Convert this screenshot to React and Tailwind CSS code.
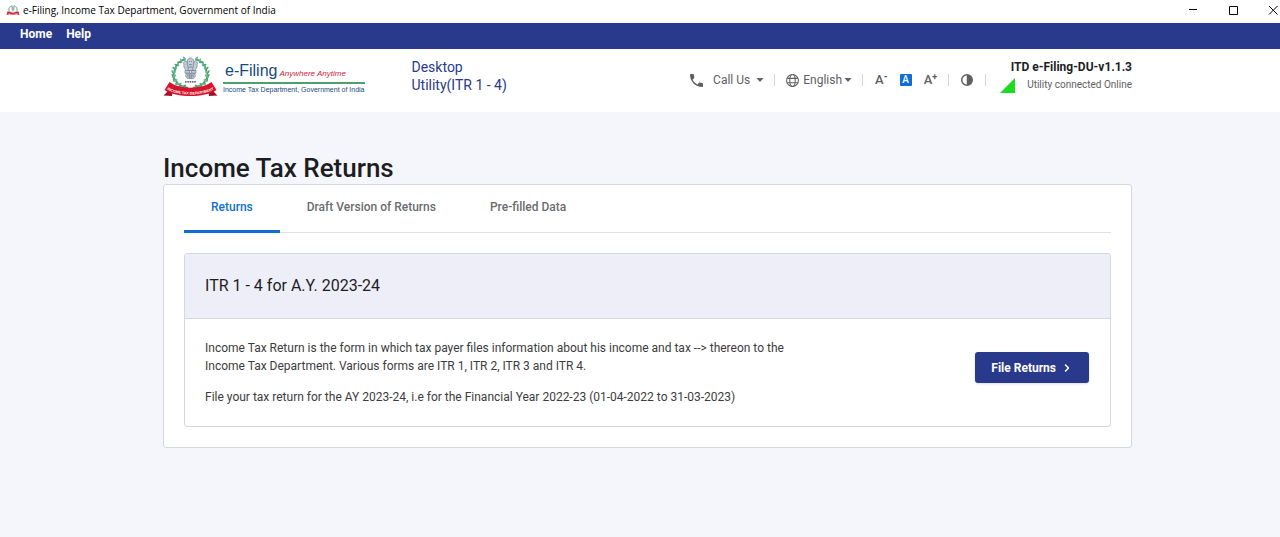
import { ChevronRight } from 'lucide-react'

const TABS = [
  { id: 'returns', label: 'Returns' },
  { id: 'drafts', label: 'Draft Version of Returns' },
  { id: 'prefilled', label: 'Pre-filled Data' },
]

// One half of the laurel wreath, mirrored for the other side.
const LEAVES = [
  [22, 31, 80],
  [18, 29.5, 62],
  [14.5, 27, 45],
  [12, 23.500, 28],
  [10.800, 19.500, 10],
  [10.800, 15.500, -8],
  [12, 11.500, -25],
  [14, 8, -40],
  [17, 5, -55],
  [20.500, 3, -70],
]

function HalfWreath() {
  return (
    <g>
      <path d="M25 31.500C14 30 10.500 23 10.800 17.500S15 6 22 2.500" fill="none" stroke="#3c9c66" strokeWidth="1.200" />
      {LEAVES.map(([x, y, angle]) => (
        <g key={y} transform={`translate(${x} ${y}) rotate(${angle})`}>
          <ellipse cx="-1.200" cy="0" rx="0.900" ry="2.300" fill="#4aa372" transform="rotate(-28)" />
          <ellipse cx="1.200" cy="0" rx="0.900" ry="2.200" fill="#6cba90" transform="rotate(28)" />
        </g>
      ))}
    </g>
  )
}

function Emblem({ className }) {
  return (
    <svg viewBox="0 0 55 41" className={className} aria-hidden="true">
      <HalfWreath />
      <g transform="translate(55 0) scale(-1 1)">
        <HalfWreath />
      </g>
      {/* lion capital */}
      <g fill="#c3cbd4" stroke="#5f7186" strokeWidth="0.6">
        <path d="M24.500 5.500C24.500 3 26 2 27.500 2s3 1 3 3.500c1.200 1.500 1.200 4 .5 6.500l-1 2.500h-5l-1-2.500c-.7-2.500-.7-5 .5-6.500z" />
        <path d="M24 5.500c-2-.8-3.500.5-3.700 2 .8.500.7 1.300.5 2.300.2 2 1.200 3 2.200 4.700h2.500z" />
        <path d="M31 5.500c2-.8 3.500.5 3.700 2-.8.500-.7 1.300-.5 2.300-.2 2-1.200 3-2.200 4.700h-2.500z" />
        <path d="M22 14.500h11v2.800H22z" />
        <path d="M23.500 17.300h8l1 2.700-2 2.500h-6l-2-2.500z" />
      </g>
      <circle cx="27.500" cy="15.900" r="1.100" fill="#fff" stroke="#46586c" strokeWidth="0.500" />
      <path d="M26 5.500h.8M28.200 5.500h.8M26.200 8.500h2.600M25.500 11h4M25 18.200v3M26.700 18.200v4M28.300 18.200v4M30 18.200v3" stroke="#46586c" strokeWidth="0.600" />
      <path d="M22 25.800h11" stroke="#303840" strokeWidth="1.200" strokeDasharray="1.600 0.700" />
      {/* ribbon */}
      <path d="M5 30l5 2-1 8-8.500-.5L4 36zM50 30l-5 2 1 8 8.500-.5L51 36z" fill="#a31126" />
      <path d="M6.500 26c10 7.500 32 7.500 42 0L53.500 34c-12 8-40 8-52 0z" fill="#d8142c" />
      <path id="ribbon-line" d="M2.500 32.500c12 8 38 8 50 0" fill="none" />
      <text fill="#fff" fontSize="3.600" fontWeight="700" fontFamily="Liberation Sans, sans-serif" textAnchor="middle">
        <textPath href="#ribbon-line" startOffset="50%">INCOME TAX DEPARTMENT</textPath>
      </text>
    </svg>
  )
}

function Caret() {
  return (
    <svg viewBox="0 0 8 4" className="h-1 w-2 fill-current" aria-hidden="true">
      <path d="M0.500 0h7L4 4z" />
    </svg>
  )
}

function Divider() {
  return <span className="h-3 w-px shrink-0 bg-gray-300" />
}

function WindowButton({ label, d }) {
  return (
    <button type="button" aria-label={label}>
      <svg viewBox="0 0 10 10" className="size-[10px] fill-none stroke-black" aria-hidden="true">
        <path d={d} />
      </svg>
    </button>
  )
}

function TitleBar() {
  return (
    <div className="flex h-[23px] items-center bg-white pb-[3px] pl-[6px] text-black">
      <Emblem className="h-[10px] w-[14px]" />
      <p className="ml-[3px] flex-1 font-['Open_Sans',sans-serif] text-[10px] leading-4">
        e-Filing, Income Tax Department, Government of India
      </p>
      <div className="flex items-center gap-[30px] pr-0.5">
        <WindowButton label="Minimise" d="M1 4.500h8" />
        <WindowButton label="Maximise" d="M1.500 1.500h8v8h-8z" />
        <WindowButton label="Close" d="M1 1l8.500 8.500M9.500 1L1 9.500" />
      </div>
    </div>
  )
}

function Header() {
  return (
    <header className="bg-white">
      <div className="mx-auto box-content flex h-[63px] max-w-[969px] items-start pl-[15px]">
        <a href="#home" className="flex items-start pt-[7px]">
          <Emblem className="h-[41px] w-[55px]" />
          <span className="mt-[7px] ml-[5px] block font-['Liberation_Sans',sans-serif]">
            <span className="flex items-baseline gap-[2px] border-b-2 border-[#4d9f6c] pl-0.5 leading-4">
              <span className="text-base leading-4 text-[#164a80]">e-Filing</span>
              <span className="text-[8px] text-[#d0203a] italic">Anywhere Anytime</span>
            </span>
            <span className="block text-[7px] leading-3 text-[#164a80]">
              Income Tax Department, Government of India
            </span>
          </span>
        </a>
        <p className="ml-[47px] w-[110px] pt-[9px] text-sm leading-[18px] text-[#293a8c]">Desktop Utility(ITR 1 - 4)</p>

        <div className="ml-auto flex h-[62px] items-center text-[#5f6063]">
          <button type="button" className="flex items-center text-xs">
            <svg viewBox="3 3 18 18" className="mr-[10px] size-[13px] fill-current" aria-hidden="true">
              <path d="M6.620 10.790c1.440 2.830 3.760 5.140 6.590 6.590l2.200-2.200c.27-.27.67-.36 1.020-.24 1.120.37 2.330.57 3.570.57.55 0 1 .45 1 1V20c0 .55-.45 1-1 1-9.390 0-17-7.610-17-17 0-.55.45-1 1-1h3.500c.55 0 1 .45 1 1 0 1.250.2 2.450.57 3.570.11.35.03.74-.25 1.020z" />
            </svg>
            <span className="mr-1.5">Call Us</span>
            <Caret />
          </button>
          <span className="mr-[11px] ml-[10px] flex"><Divider /></span>
          <button type="button" className="flex items-center text-xs">
            <svg viewBox="0 0 24 24" className="mr-1 size-[13px] fill-none stroke-current stroke-2" aria-hidden="true">
              <circle cx="12" cy="12" r="11" />
              <ellipse cx="12" cy="12" rx="5" ry="11" />
              <path d="M2 8h20M2 16h20" />
            </svg>
            <span className="mr-0.5">English</span>
            <Caret />
          </button>
          <span className="mr-3 ml-[10px] flex"><Divider /></span>
          <div className="flex items-center gap-3">
            <button type="button" aria-label="Decrease text size" className="flex items-start text-[13px] leading-3 font-medium">
              A<span className="text-[10px] leading-[6px] font-bold">-</span>
            </button>
            <button type="button" aria-label="Default text size" className="size-3 rounded-[1px] bg-[#0f6fd0] text-center text-[10px] leading-3 font-medium text-white">
              A
            </button>
            <button type="button" aria-label="Increase text size" className="flex items-start text-[13px] leading-3 font-medium">
              A<span className="text-[9px] leading-[6px] font-bold">+</span>
            </button>
          </div>
          <span className="mr-3 ml-[11px] flex"><Divider /></span>
          <button type="button" aria-label="Contrast">
            <svg viewBox="0 0 24 24" className="size-3 stroke-current" aria-hidden="true">
              <circle cx="12" cy="12" r="10.500" fill="none" strokeWidth="3" />
              <path d="M12 2a10 10 0 0 1 0 20z" fill="currentColor" />
            </svg>
          </button>
          <span className="mr-3.5 ml-3 flex"><Divider /></span>
          <div className="self-start pt-[9px] text-right">
            <p className="text-xs leading-[18px] font-bold text-[#1d1d1f]">ITD e-Filing-DU-v1.1.3</p>
            <p className="flex items-center gap-3 text-[10px] leading-[18px]">
              <svg viewBox="0 0 15 15" className="size-[15px]" aria-hidden="true">
                <path d="M15 0v15H0z" fill="#1ddb22" />
              </svg>
              Utility connected Online
            </p>
          </div>
        </div>
      </div>
    </header>
  )
}

function ReturnCard() {
  return (
    <section className="mt-5 overflow-hidden rounded-[3px] border border-[#d5d8de]">
      <h2 className="border-b border-[#d5d8de] bg-[#eeeef8] px-5 py-5 text-base leading-6 text-[#1d1d1f]">
        ITR 1 - 4 for A.Y. 2023-24
      </h2>
      <div className="flex items-center justify-between pt-5 pr-[21px] pb-5 pl-5">
        <div className="max-w-[600px] text-xs leading-[18px] text-[#3c3c3e]">
          <p>
            Income Tax Return is the form in which tax payer files information about his income and tax --&gt; thereon
            to the Income Tax Department. Various forms are ITR 1, ITR 2, ITR 3 and ITR 4.
          </p>
          <p className="mt-[13px]">
            File your tax return for the AY 2023-24, i.e for the Financial Year 2022-23 (01-04-2022 to 31-03-2023)
          </p>
        </div>
        <button
          type="button"
          className="mb-2.5 flex h-[31px] items-center gap-[5px] rounded-[3px] bg-[#293a8c] px-4 text-xs font-bold text-white shadow-sm"
        >
          File Returns
          <ChevronRight size={12} strokeWidth={3} />
        </button>
      </div>
    </section>
  )
}

export default function App() {
  return (
    <div className="min-h-screen bg-[#f5f6fb] font-['Roboto',sans-serif]">
      <TitleBar />
      <nav aria-label="Main" className="flex h-[26px] items-center gap-3.5 bg-[#293a8c] pb-1 pl-5 text-xs font-bold text-white">
        <a href="#home">Home</a>
        <a href="#help">Help</a>
      </nav>
      <Header />

      <main className="mx-auto box-content max-w-[969px] pt-10 pl-[15px]">
        <h1 className="text-[26px] leading-8 font-medium text-[#1d1d1f]">Income Tax Returns</h1>
        <div className="rounded-[3px] border border-[#d5d8de] bg-white px-5 pb-5">
          <div role="tablist" className="flex border-b border-[#dfe1e5]">
            {TABS.map((tab) => (
              <button
                key={tab.id}
                type="button"
                role="tab"
                aria-selected={tab.id === 'returns'}
                className={`-mb-px h-12 border-b-[3px] px-[27px] pb-0.5 text-xs font-medium ${
                  tab.id === 'returns' ? 'border-[#0f6fd0] text-[#0f6fd0]' : 'border-transparent text-[#6b6c70]'
                }`}
              >
                {tab.label}
              </button>
            ))}
          </div>
          <ReturnCard />
        </div>
      </main>
    </div>
  )
}
